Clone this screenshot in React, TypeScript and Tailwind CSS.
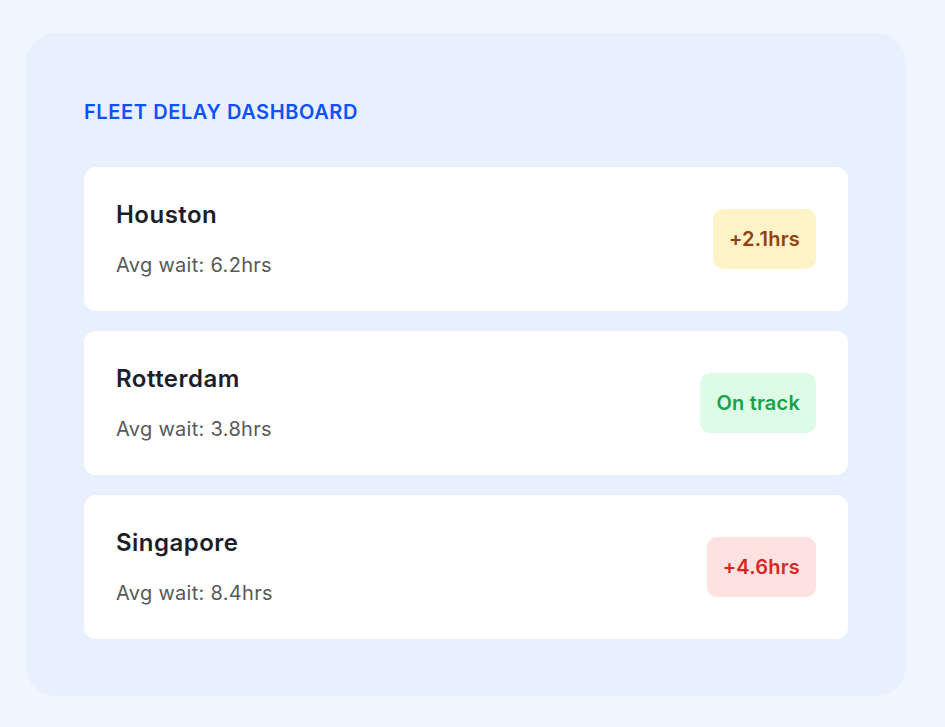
const ports = [
  { name: 'Houston', wait: '6.2hrs', badge: '+2.1hrs', tone: 'bg-[#fef3c7] text-[#92400e]' },
  { name: 'Rotterdam', wait: '3.8hrs', badge: 'On track', tone: 'bg-[#dcfce7] text-[#16a34a]' },
  { name: 'Singapore', wait: '8.4hrs', badge: '+4.6hrs', tone: 'bg-[#fee2e2] text-[#dc2626]' },
]

export default function App() {
  return (
    <div
      className="min-h-screen bg-[#f0f6ff] pl-[26px] pt-[33px] pb-[31px]"
      style={{ fontFamily: 'Inter, "Noto Sans", sans-serif' }}
    >
      <div className="w-[880px] rounded-[30px] bg-[#e9f0fd] px-[58px] pt-[65px] pb-[57px]">
        <h1 className="mb-[41px] text-xl leading-7 font-semibold tracking-[0.03em] text-[#0a52ff] uppercase">
          Fleet Delay Dashboard
        </h1>

        <div className="flex flex-col gap-5">
          {ports.map((p) => (
            <div key={p.name} className="flex h-[144px] items-center justify-between rounded-xl bg-white px-8">
              <div>
                <h2 className="text-2xl leading-8 font-semibold tracking-[0.02em] text-[#1c1f2a]">{p.name}</h2>
                <p className="mt-5 text-xl leading-7 tracking-[0.015em] text-[#595959]">Avg wait: {p.wait}</p>
              </div>
              <span className={`rounded-[10px] px-4 py-4 text-xl leading-7 font-semibold tracking-[0.01em] ${p.tone}`}>
                {p.badge}
              </span>
            </div>
          ))}
        </div>
      </div>
    </div>
  )
}
